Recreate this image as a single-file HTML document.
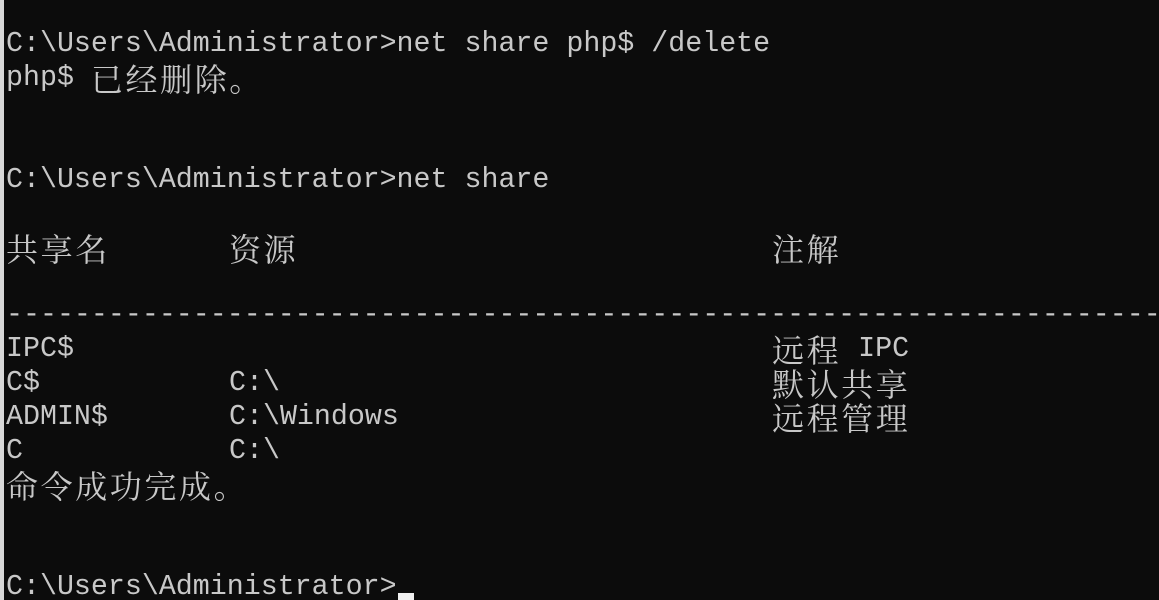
<!DOCTYPE html>
<html><head><meta charset="utf-8"><style>
html,body{margin:0;padding:0;background:#0c0c0c;width:1159px;height:600px;overflow:hidden;position:relative}
.b{position:absolute;left:0;top:0;width:4px;height:600px;background:#d8d8d8}
.l{position:absolute;left:6px;height:34px;line-height:34px;white-space:pre;color:#c8c8c8;font-family:"Liberation Mono",monospace;font-size:28.3px;letter-spacing:0px}
.r{left:229px}.m{left:772px}
i{font-style:normal;display:inline-block;width:34.6px;text-align:left;font-family:"Noto Serif CJK SC","Noto Sans CJK SC",serif;font-size:32px;vertical-align:top;letter-spacing:0}
.c{position:absolute;left:398px;top:593px;width:16px;height:7px;background:#f0f0f0}
</style></head><body>
<div class="b"></div>
<div class="l" style="top:27px">C:\Users\Administrator&gt;net share php$ /delete</div>
<div class="l" style="top:61px">php$ <i>已</i><i>经</i><i>删</i><i>除</i><i>。</i></div>
<div class="l" style="top:163px">C:\Users\Administrator&gt;net share</div>
<div class="l" style="top:231px"><i>共</i><i>享</i><i>名</i></div>
<div class="l r" style="top:231px"><i>资</i><i>源</i></div>
<div class="l m" style="top:231px"><i>注</i><i>解</i></div>
<div class="l" style="top:298px">--------------------------------------------------------------------</div>
<div class="l" style="top:332px">IPC$</div>
<div class="l m" style="top:332px"><i>远</i><i>程</i> IPC</div>
<div class="l" style="top:366px">C$</div>
<div class="l r" style="top:366px">C:\</div>
<div class="l m" style="top:366px"><i>默</i><i>认</i><i>共</i><i>享</i></div>
<div class="l" style="top:400px">ADMIN$</div>
<div class="l r" style="top:400px">C:\Windows</div>
<div class="l m" style="top:400px"><i>远</i><i>程</i><i>管</i><i>理</i></div>
<div class="l" style="top:434px">C</div>
<div class="l r" style="top:434px">C:\</div>
<div class="l" style="top:468px"><i>命</i><i>令</i><i>成</i><i>功</i><i>完</i><i>成</i><i>。</i></div>
<div class="l" style="top:570px">C:\Users\Administrator&gt;</div>
<div class="c"></div>
</body></html>
